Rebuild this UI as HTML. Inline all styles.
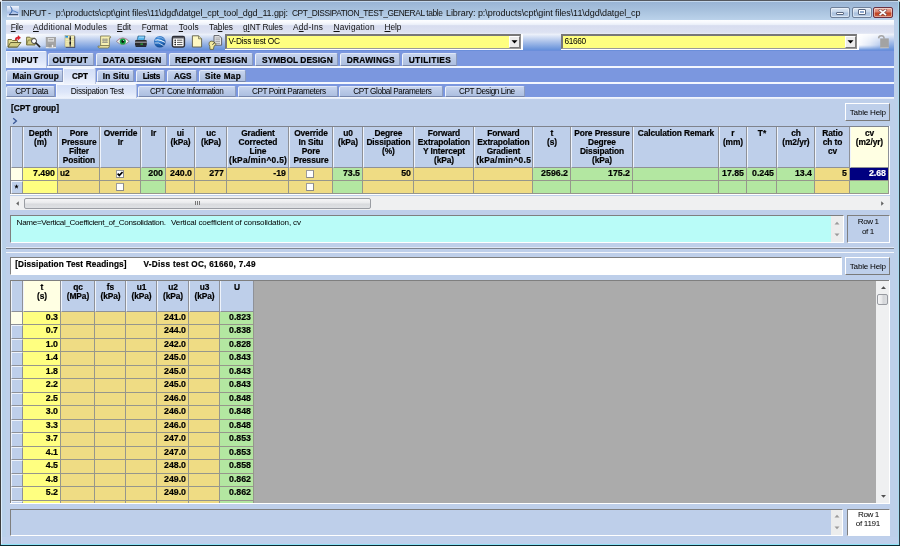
<!DOCTYPE html><html><head><meta charset="utf-8"><title>INPUT</title><style>
html,body{margin:0;padding:0}
body{width:900px;height:546px;position:relative;overflow:hidden;background:#c3d5ec;font-family:"Liberation Sans",sans-serif;font-size:8px;color:#000}
div,span{box-sizing:border-box}
.a{position:absolute}
.t{position:absolute;white-space:nowrap;filter:blur(0.3px)}
.b{font-weight:bold;-webkit-text-stroke:0.2px currentColor}
.tab{position:absolute;border-radius:2px 2px 0 0;background:linear-gradient(#c8d5ee 0%,#b9c9e7 45%,#adbfe0 100%);border-left:1px solid #eef3fc;border-top:1px solid #dfe7f7;border-right:1px solid #8b9bbd;border-bottom:1px solid #7787ad}
.sel{position:absolute;background:linear-gradient(#d3dff7 0%,#dde6f9 55%,#eef3fd 100%);border-top-right-radius:2px;border-left:1px solid #f4f7fd;border-top:1px solid #f4f7fd;border-right:1px solid #b4c1dd}
.hc{position:absolute;background:#becfea;border-left:1px solid #eef3fb;border-right:1px solid #8e9198;border-bottom:1px solid #8e9198}
.c{position:absolute;border-right:1px solid #96968c;border-bottom:1px solid #96968c}
.sunk{position:absolute;border-top:1px solid #7f7f7f;border-left:1px solid #7f7f7f;border-right:1px solid #fff;border-bottom:1px solid #fff}
.btn{position:absolute;background:#becfea;border-top:1px solid #fff;border-left:1px solid #fff;border-right:1px solid #7a7a7a;border-bottom:1px solid #7a7a7a}
.cb{position:absolute;width:8px;height:8px;background:#fff;border:1px solid #9c9c9c;border-bottom-color:#8a8a8a;border-right-color:#8a8a8a}
u{text-decoration:underline;text-underline-offset:1px}
</style></head><body>
<div class="a" style="left:0;top:0;width:900px;height:21px;background:linear-gradient(#97b2d3 0%,#9ab5d5 10%,#a6c0dc 45%,#bdd4ec 100%)"></div>
<div class="a" style="left:1px;top:1px;width:898px;height:1px;background:#c3d7ec"></div>
<div class="a" style="left:0;top:20px;width:6px;height:526px;background:#b9d0ea"></div>
<div class="a" style="left:894px;top:20px;width:6px;height:526px;background:#bdd0ea"></div>
<div class="a" style="left:0;top:537px;width:900px;height:9px;background:#bfd0ec"></div>
<div class="a" style="left:1px;top:1px;width:1px;height:543px;background:#dcecfb"></div>
<div class="a" style="left:898px;top:1px;width:1px;height:543px;background:#a9d9ee"></div>
<div class="a" style="left:0;top:0;width:900px;height:1px;background:#54585e"></div>
<div class="a" style="left:0;top:0;width:1px;height:546px;background:#3c3c3c"></div>
<div class="a" style="left:899px;top:0;width:1px;height:546px;background:#2f3f49"></div>
<div class="a" style="left:1px;top:544px;width:898px;height:1px;background:#8fe3f7"></div>
<div class="a" style="left:0;top:545px;width:900px;height:1px;background:#0c2a32"></div>
<div class="a" style="left:0;top:0;width:2px;height:1px;background:#e8e8e8"></div><div class="a" style="left:0;top:1px;width:1px;height:1px;background:#bbb"></div>
<div class="a" style="left:898px;top:0;width:2px;height:1px;background:#e8e8e8"></div><div class="a" style="left:899px;top:1px;width:1px;height:1px;background:#bbb"></div>
<svg class="a" style="left:7px;top:6px" width="12" height="11" viewBox="0 0 12 11"><defs><linearGradient id="ig" x1="0" y1="0" x2="0" y2="1"><stop offset="0" stop-color="#eef3fb"/><stop offset="0.6" stop-color="#a9c0e6"/><stop offset="1" stop-color="#e8eef9"/></linearGradient></defs><rect x="0" y="0" width="12" height="11" fill="url(#ig)"/><path d="M3.5 0.5 Q5.5 3 5 5 Q4.5 7 2.5 8" stroke="#2f5fa8" stroke-width="1" fill="none"/><path d="M5 4.5 Q8 5 11 7" stroke="#5a86c8" stroke-width="1" fill="none"/><path d="M2 8.7 L11 8.7" stroke="#1c2c48" stroke-width="1"/></svg>
<div id="ti1" class="t" style="left:21px;top:7px;font-size:9.0px;line-height:12px;height:12px;letter-spacing:-0.400px;color:#111;white-space:pre;">INPUT -</div>
<div id="ti2" class="t" style="left:55.8px;top:7px;font-size:9.0px;line-height:12px;height:12px;letter-spacing:-0.109px;color:#111;white-space:pre;">p:\products\cpt\gint files\11\dgd\datgel_cpt_tool_dgd_11.gpj:</div>
<div id="ti3" class="t" style="left:291.9px;top:7px;font-size:8.4px;line-height:12px;height:12px;letter-spacing:-0.400px;color:#111;white-space:pre;">CPT_DISSIPATION_TEST_GENERAL table</div>
<div id="ti4" class="t" style="left:446px;top:7px;font-size:9.0px;line-height:12px;height:12px;letter-spacing:-0.068px;color:#111;white-space:pre;">Library: p:\products\cpt\gint files\11\dgd\datgel_cp</div>
<div class="a" style="left:830px;top:7px;width:20px;height:11px;background:linear-gradient(#dbe6f3 0%,#c3d4e9 45%,#a9c0dd 55%,#bcd0e8 100%);border:1px solid #6d7f99;border-radius:2px;box-shadow:inset 0 0 0 1px rgba(255,255,255,.45)"></div>
<div class="a" style="left:852px;top:7px;width:20px;height:11px;background:linear-gradient(#dbe6f3 0%,#c3d4e9 45%,#a9c0dd 55%,#bcd0e8 100%);border:1px solid #6d7f99;border-radius:2px;box-shadow:inset 0 0 0 1px rgba(255,255,255,.45)"></div>
<div class="a" style="left:873px;top:7px;width:20px;height:11px;background:linear-gradient(#e9a898 0%,#d9806c 45%,#c0401f 55%,#d0603f 100%);border:1px solid #6a3040;border-radius:2px;box-shadow:inset 0 0 0 1px rgba(255,255,255,.45)"></div>
<div class="a" style="left:836px;top:12px;width:8px;height:3px;background:#fff;border:1px solid #5a6880;border-radius:1px"></div>
<div class="a" style="left:858px;top:9px;width:8px;height:6px;background:#fff;border:1px solid #5a6880;border-radius:1px"></div>
<div class="a" style="left:860px;top:11px;width:4px;height:2px;background:#8ea9cf;border:0"></div>
<svg class="a" style="left:878px;top:9px" width="10" height="7" viewBox="0 0 10 7"><path d="M2.2 1.4 L7.4 5.6 M7.4 1.4 L2.2 5.6" stroke="#7a4a48" stroke-width="2.9" stroke-linecap="square"/><path d="M2.2 1.4 L7.4 5.6 M7.4 1.4 L2.2 5.6" stroke="#fff" stroke-width="1.7" stroke-linecap="square"/></svg>
<div class="a" style="left:6px;top:20px;width:888px;height:14px;background:linear-gradient(#fdfeff 0%,#f6f8fd 18%,#e9eef8 36%,#d8ddef 40%,#dde2f2 88%,#e8ecf6 100%)"></div>
<div id="m0" class="t" style="left:10.8px;top:21px;font-size:8.3px;line-height:12px;height:12px;letter-spacing:-0.297px;color:#111;white-space:pre;"><u>F</u>ile</div>
<div id="m1" class="t" style="left:33px;top:21px;font-size:8.3px;line-height:12px;height:12px;letter-spacing:0.228px;color:#111;white-space:pre;"><u>A</u>dditional Modules</div>
<div id="m2" class="t" style="left:117px;top:21px;font-size:8.3px;line-height:12px;height:12px;letter-spacing:-0.104px;color:#111;white-space:pre;"><u>E</u>dit</div>
<div id="m3" class="t" style="left:141.7px;top:21px;font-size:8.3px;line-height:12px;height:12px;letter-spacing:-0.102px;color:#111;white-space:pre;">F<u>o</u>rmat</div>
<div id="m4" class="t" style="left:178.7px;top:21px;font-size:8.3px;line-height:12px;height:12px;letter-spacing:0.152px;color:#111;white-space:pre;"><u>T</u>ools</div>
<div id="m5" class="t" style="left:209px;top:21px;font-size:8.3px;line-height:12px;height:12px;letter-spacing:0.000px;color:#111;white-space:pre;">Ta<u>b</u>les</div>
<div id="m6" class="t" style="left:243px;top:21px;font-size:8.3px;line-height:12px;height:12px;letter-spacing:-0.153px;color:#111;white-space:pre;">g<u>I</u>NT Rules</div>
<div id="m7" class="t" style="left:293px;top:21px;font-size:8.3px;line-height:12px;height:12px;letter-spacing:0.229px;color:#111;white-space:pre;">A<u>d</u>d-Ins</div>
<div id="m8" class="t" style="left:333.5px;top:21px;font-size:8.3px;line-height:12px;height:12px;letter-spacing:0.198px;color:#111;white-space:pre;"><u>N</u>avigation</div>
<div id="m9" class="t" style="left:384.5px;top:21px;font-size:8.3px;line-height:12px;height:12px;letter-spacing:-0.026px;color:#111;white-space:pre;"><u>H</u>elp</div>
<div class="a" style="left:6px;top:34px;width:888px;height:17px;background:linear-gradient(#eff3fb 0%,#c9d7f1 25%,#a3bce8 50%,#7fa3e0 75%,#5d8ad8 100%)"></div>
<div class="a" style="left:6px;top:34px;width:70px;height:17px;background:linear-gradient(to right,rgba(255,255,255,.95) 0%,rgba(255,255,255,.75) 30%,rgba(255,255,255,0) 100%);-webkit-mask-image:linear-gradient(to bottom,#000 0%,#000 65%,transparent 95%);mask-image:linear-gradient(to bottom,#000 0%,#000 65%,transparent 95%)"></div>
<div class="a" style="left:859px;top:34px;width:32px;height:17px;background:linear-gradient(to right,rgba(255,255,255,.95) 0%,rgba(255,255,255,.7) 35%,rgba(255,255,255,0) 100%);-webkit-mask-image:linear-gradient(to bottom,#000 0%,#000 65%,transparent 95%);mask-image:linear-gradient(to bottom,#000 0%,#000 65%,transparent 95%)"></div>
<div class="a" style="left:225px;top:34px;width:298px;height:17px;background:#fff"></div>
<div class="a" style="left:225px;top:34px;width:296px;height:15px;background:#ffff80;border-top:2px solid #787878;border-left:2px solid #787878;border-right:1px solid #8c8c8c;border-bottom:1px solid #9a9a9a"></div>
<div class="a" style="left:509px;top:36px;width:11px;height:12px;background:#ececec;border-top:1px solid #fff;border-left:1px solid #fff;border-right:1px solid #7a7a7a;border-bottom:1px solid #7a7a7a"></div>
<svg class="a" style="left:511px;top:40px" width="7" height="4" viewBox="0 0 7 4"><path d="M0.5 0.3 L6.5 0.3 L3.5 3.6 Z" fill="#000"/></svg>
<div id="cb1" class="t" style="left:228.5px;top:35px;font-size:8.3px;line-height:12px;height:12px;letter-spacing:-0.224px;color:#000;white-space:pre;">V-Diss test OC</div>
<div class="a" style="left:561px;top:34px;width:298px;height:17px;background:#fff"></div>
<div class="a" style="left:561px;top:34px;width:296px;height:15px;background:#ffff80;border-top:2px solid #787878;border-left:2px solid #787878;border-right:1px solid #8c8c8c;border-bottom:1px solid #9a9a9a"></div>
<div class="a" style="left:845px;top:36px;width:11px;height:12px;background:#ececec;border-top:1px solid #fff;border-left:1px solid #fff;border-right:1px solid #7a7a7a;border-bottom:1px solid #7a7a7a"></div>
<svg class="a" style="left:847px;top:40px" width="7" height="4" viewBox="0 0 7 4"><path d="M0.5 0.3 L6.5 0.3 L3.5 3.6 Z" fill="#000"/></svg>
<div id="cb2" class="t" style="left:564.5px;top:35px;font-size:8.3px;line-height:12px;height:12px;letter-spacing:-0.395px;color:#000;white-space:pre;">61660</div>
<svg class="a" style="left:7px;top:35px" width="15" height="13" viewBox="0 0 15 13"><path d="M1 4.5 L1 12 L10.5 12 L10.5 5.5 L5.5 5.5 L4.5 4.5 Z" fill="#e4df98" stroke="#6d6a34" stroke-width="0.9"/><path d="M1 12 L3.5 7.5 L14 7.5 L10.5 12 Z" fill="#d3cd84" stroke="#5c5a2c" stroke-width="0.9"/><path d="M8.2 5.2 Q8 1.8 11 2 L11 0.6 L13.6 2.8 L11 5 L11 3.6 Q9.4 3.4 9.5 5.2 Z" fill="#e8202a" stroke="#b01018" stroke-width="0.4"/></svg>
<svg class="a" style="left:26px;top:35px" width="15" height="13" viewBox="0 0 15 13"><path d="M0.6 2.2 L0.6 9.8 L9 9.8 L9 3.2 L4.6 3.2 L3.8 2.2 Z" fill="#dcd690" stroke="#6d6a34" stroke-width="0.9"/><path d="M0.6 9.8 L2.2 5 L9.5 5 L9 9.8 Z" fill="#cfc982" stroke="#6d6a34" stroke-width="0.7"/><circle cx="8" cy="6" r="2.5" fill="#fff" stroke="#444" stroke-width="1"/><path d="M10 8 L13.6 11.6" stroke="#222" stroke-width="1.6" stroke-linecap="round"/></svg>
<svg class="a" style="left:45px;top:36px" width="12" height="13" viewBox="0 0 12 13"><rect x="0.8" y="1" width="10.2" height="11" fill="#a4a4a4"/><rect x="0.8" y="11" width="10.2" height="1.2" fill="#e6e6e6"/><rect x="2.8" y="2" width="6.2" height="3.6" fill="#dcdcdc"/><rect x="3.6" y="3" width="4.6" height="1.2" fill="#a9a9a9"/><rect x="3.6" y="8" width="5" height="3.4" fill="#9a9a9a"/><rect x="6.8" y="8.8" width="1.4" height="2.6" fill="#f2f2f2"/></svg>
<svg class="a" style="left:64px;top:35px" width="12" height="13" viewBox="0 0 12 13"><rect x="1.8" y="1.2" width="9.4" height="11.6" fill="#3b3f5c"/><rect x="1" y="0.5" width="9.2" height="11.4" fill="#f1ecb4" stroke="#8a8660" stroke-width="0.4"/><rect x="1.4" y="0.9" width="2.6" height="1.8" fill="#1f8ee0"/><path d="M1.2 3.4 L10 3.4 M1.2 5.6 L10 5.6 M1.2 7.8 L10 7.8 M1.2 10 L10 10" stroke="#d8d29a" stroke-width="0.7"/><rect x="5.6" y="1" width="1.3" height="10.6" fill="#5a5a5a"/><rect x="5.6" y="2.6" width="1.3" height="2.2" fill="#111"/><rect x="5.6" y="6.8" width="1.3" height="2.6" fill="#111"/></svg>
<svg class="a" style="left:97px;top:35px" width="15" height="14" viewBox="0 0 15 14"><path d="M3.6 1 L12.4 1 Q14 1.2 13.6 2.8 L12.4 2.8 L12.4 10.6 L3.6 10.6 Z" fill="#f7f1b2" stroke="#77724a" stroke-width="0.8"/><path d="M1 11 Q0.6 13 2.6 13 L10.8 13 Q12.6 12.8 12.4 10.6 L3 10.6 Q3.4 11.8 1 11 Z" fill="#ede7a4" stroke="#77724a" stroke-width="0.8"/><path d="M5.2 4.2 L10.8 4.2 M5.2 5.8 L10.8 5.8 M5.2 7.4 L10.8 7.4" stroke="#8a8a80" stroke-width="0.9"/><path d="M6.6 3.6 L6.6 8 M9.2 3.6 L9.2 8" stroke="#a0a094" stroke-width="0.6"/></svg>
<svg class="a" style="left:116px;top:36px" width="14" height="11" viewBox="0 0 14 11"><path d="M0.4 5.4 Q6.8 -1.2 13.2 5.4 Q6.8 11.6 0.4 5.4 Z" fill="#f4f4f4" stroke="#8a8088" stroke-width="0.9"/><path d="M1.2 4.4 Q6.8 -0.6 12.4 4.4" stroke="#c88aa0" stroke-width="0.7" fill="none"/><circle cx="6.8" cy="5.5" r="3.1" fill="#16a043"/><circle cx="6.8" cy="5.5" r="1.4" fill="#0a1a10"/><circle cx="7.4" cy="4.6" r="0.5" fill="#dff"/></svg>
<svg class="a" style="left:134px;top:35px" width="14" height="13" viewBox="0 0 14 13"><path d="M4 1 L11 1 L10 5.4 L3 5.4 Z" fill="#59b7ee" stroke="#27506e" stroke-width="0.6"/><path d="M5 2.2 L10 2.2" stroke="#bfe6ff" stroke-width="0.8"/><path d="M1 6 Q1 5 2.4 5 L11.4 5 Q12.8 5 12.8 6 L12.8 10.4 L1 10.4 Z" fill="#2b2b2d"/><rect x="1" y="6.6" width="11.8" height="1.2" fill="#9c9ca2"/><rect x="1.6" y="10.4" width="10.6" height="1.4" fill="#0c0c0c"/><rect x="6.4" y="8.6" width="2.6" height="1" fill="#28c43c"/></svg>
<svg class="a" style="left:153px;top:35px" width="14" height="13" viewBox="0 0 14 13"><defs><radialGradient id="gg" cx="0.4" cy="0.3" r="0.8"><stop offset="0" stop-color="#4a9ae6"/><stop offset="0.6" stop-color="#1f63b4"/><stop offset="1" stop-color="#123f7c"/></radialGradient></defs><circle cx="6.8" cy="6.8" r="5.8" fill="url(#gg)"/><path d="M2.2 5.2 Q6 3.6 12 7.4" stroke="#eef4fc" stroke-width="1.1" fill="none"/><path d="M1.6 8 Q5.4 6.6 10.6 10.6" stroke="#cfe0f4" stroke-width="0.9" fill="none"/><path d="M4.2 2 Q8 1.6 11.6 4.6" stroke="#a9c8ee" stroke-width="0.7" fill="none"/></svg>
<svg class="a" style="left:171px;top:35px" width="15" height="13" viewBox="0 0 15 13"><rect x="1.4" y="1.6" width="12" height="10.4" rx="1.4" fill="#fff" stroke="#2f3038" stroke-width="1.5"/><rect x="2" y="2" width="10.8" height="1.5" fill="#55565e"/><circle cx="4.2" cy="5.2" r="0.8" fill="#111"/><circle cx="4.2" cy="7.4" r="0.8" fill="#111"/><circle cx="4.2" cy="9.6" r="0.8" fill="#111"/><path d="M6 5.2 L11.4 5.2 M6 7.4 L11.4 7.4 M6 9.6 L11.4 9.6" stroke="#444" stroke-width="0.9"/></svg>
<svg class="a" style="left:191px;top:35px" width="12" height="13" viewBox="0 0 12 13"><path d="M1.4 0.8 L7.6 0.8 L10.6 3.8 L10.6 12 L1.4 12 Z" fill="#fdf8c2" stroke="#5e5c48" stroke-width="0.9"/><path d="M7.6 0.8 L7.6 3.8 L10.6 3.8" fill="#e6e0a0" stroke="#5e5c48" stroke-width="0.7"/></svg>
<svg class="a" style="left:208px;top:35px" width="15" height="15" viewBox="0 0 15 15"><path d="M6 0.6 L11.2 0.6 L13.6 3 L13.6 10.2 L6 10.2 Z" fill="#e9e9ea" stroke="#55565c" stroke-width="0.9"/><path d="M7.4 3 L12 3 M7.4 4.8 L12 4.8 M7.4 6.6 L12 6.6 M7.4 8.4 L12 8.4" stroke="#8d8d92" stroke-width="0.8"/><path d="M1.2 7.4 Q3 5.4 5 6.4 L7.6 8.2 Q8.6 9.2 7.4 10 L6 11.2 L5.4 14.4 L2 14.4 L1.8 11.4 Q0.6 9.4 1.2 7.4 Z" fill="#f3ea9e" stroke="#5f5a34" stroke-width="0.8"/><path d="M4.4 9.6 L7 7.6" stroke="#333" stroke-width="0.9"/></svg>
<svg class="a" style="left:876px;top:35px" width="14" height="14" viewBox="0 0 14 14"><path d="M2.6 3.4 Q2.8 0.8 5.4 0.8 Q8 0.8 8.2 3.6" stroke="#a6a6a6" stroke-width="1.5" fill="none"/><rect x="4.2" y="3.4" width="8.6" height="9.6" fill="#a3a3a3"/><rect x="4.2" y="12.4" width="8.6" height="0.8" fill="#c8c8c8"/></svg>
<div class="a" style="left:6px;top:51px;width:888px;height:15px;background:#7b97df"></div>
<div class="a" style="left:6px;top:50px;width:888px;height:1px;background:#6a8edb"></div>
<div class="a" style="left:6px;top:66px;width:888px;height:2px;background:#f3f7fe"></div>
<div class="a" style="left:6px;top:68px;width:888px;height:14px;background:#7b97df"></div>
<div class="a" style="left:6px;top:82px;width:888px;height:2px;background:#f3f7fe"></div>
<div class="a" style="left:6px;top:84px;width:888px;height:13px;background:#7b97df"></div>
<div class="a" style="left:6px;top:97px;width:888px;height:2px;background:linear-gradient(#f6f9fe,#e3eaf7)"></div>
<div class="sel" style="left:6px;top:51px;width:41px;height:17px"></div>
<div id="ta0" class="t b" style="left:12px;top:54px;font-size:8.4px;line-height:12px;height:12px;letter-spacing:0.219px;color:#000;white-space:pre;">INPUT</div>
<div class="tab" style="left:48px;top:53px;width:46px;height:13px"></div>
<div id="ta1" class="t b" style="left:52.5px;top:54px;font-size:8.4px;line-height:12px;height:12px;letter-spacing:0.212px;color:#000;white-space:pre;">OUTPUT</div>
<div class="tab" style="left:96px;top:53px;width:71px;height:13px"></div>
<div id="ta2" class="t b" style="left:102.7px;top:54px;font-size:8.4px;line-height:12px;height:12px;letter-spacing:0.246px;color:#000;white-space:pre;">DATA DESIGN</div>
<div class="tab" style="left:169px;top:53px;width:84px;height:13px"></div>
<div id="ta3" class="t b" style="left:175px;top:54px;font-size:8.4px;line-height:12px;height:12px;letter-spacing:0.246px;color:#000;white-space:pre;">REPORT DESIGN</div>
<div class="tab" style="left:255px;top:53px;width:83px;height:13px"></div>
<div id="ta4" class="t b" style="left:262px;top:54px;font-size:8.4px;line-height:12px;height:12px;letter-spacing:0.048px;color:#000;white-space:pre;">SYMBOL DESIGN</div>
<div class="tab" style="left:340px;top:53px;width:60px;height:13px"></div>
<div id="ta5" class="t b" style="left:346.8px;top:54px;font-size:8.4px;line-height:12px;height:12px;letter-spacing:0.234px;color:#000;white-space:pre;">DRAWINGS</div>
<div class="tab" style="left:402px;top:53px;width:55px;height:13px"></div>
<div id="ta6" class="t b" style="left:408.7px;top:54px;font-size:8.4px;line-height:12px;height:12px;letter-spacing:0.317px;color:#000;white-space:pre;">UTILITIES</div>
<div class="tab" style="left:6px;top:70px;width:57px;height:12px"></div>
<div id="tb0" class="t b" style="left:12.5px;top:71px;font-size:8.2px;line-height:11px;height:11px;letter-spacing:0.080px;color:#000;white-space:pre;">Main Group</div>
<div class="sel" style="left:63px;top:68px;width:33px;height:16px"></div>
<div id="tb1" class="t b" style="left:72px;top:71px;font-size:8.2px;line-height:11px;height:11px;letter-spacing:-0.188px;color:#000;white-space:pre;">CPT</div>
<div class="tab" style="left:97px;top:70px;width:37px;height:12px"></div>
<div id="tb2" class="t b" style="left:102.7px;top:71px;font-size:8.2px;line-height:11px;height:11px;letter-spacing:0.264px;color:#000;white-space:pre;">In Situ</div>
<div class="tab" style="left:136px;top:70px;width:29px;height:12px"></div>
<div id="tb3" class="t b" style="left:142.7px;top:71px;font-size:8.2px;line-height:11px;height:11px;letter-spacing:-0.400px;color:#000;white-space:pre;">Lists</div>
<div class="tab" style="left:167px;top:70px;width:30px;height:12px"></div>
<div id="tb4" class="t b" style="left:173.9px;top:71px;font-size:8.2px;line-height:11px;height:11px;letter-spacing:-0.075px;color:#000;white-space:pre;">AGS</div>
<div class="tab" style="left:199px;top:70px;width:47px;height:12px"></div>
<div id="tb5" class="t b" style="left:205px;top:71px;font-size:8.2px;line-height:11px;height:11px;letter-spacing:0.290px;color:#000;white-space:pre;">Site Map</div>
<div class="tab" style="left:6px;top:86px;width:49px;height:11px"></div>
<div id="tc0" class="t" style="left:15.2px;top:86px;font-size:8.2px;line-height:11px;height:11px;letter-spacing:-0.400px;color:#000;white-space:pre;">CPT Data</div>
<div class="sel" style="left:56px;top:84px;width:81px;height:14px"></div>
<div id="tc1" class="t" style="left:70.7px;top:86px;font-size:8.2px;line-height:11px;height:11px;letter-spacing:-0.259px;color:#000;white-space:pre;">Dissipation Test</div>
<div class="tab" style="left:138px;top:86px;width:98px;height:11px"></div>
<div id="tc2" class="t" style="left:150px;top:86px;font-size:8.2px;line-height:11px;height:11px;letter-spacing:-0.400px;color:#000;white-space:pre;">CPT Cone Information</div>
<div class="tab" style="left:238px;top:86px;width:100px;height:11px"></div>
<div id="tc3" class="t" style="left:251.9px;top:86px;font-size:8.2px;line-height:11px;height:11px;letter-spacing:-0.400px;color:#000;white-space:pre;">CPT Point Parameters</div>
<div class="tab" style="left:339px;top:86px;width:104px;height:11px"></div>
<div id="tc4" class="t" style="left:353.2px;top:86px;font-size:8.2px;line-height:11px;height:11px;letter-spacing:-0.400px;color:#000;white-space:pre;">CPT Global Parameters</div>
<div class="tab" style="left:445px;top:86px;width:80px;height:11px"></div>
<div id="tc5" class="t" style="left:459px;top:86px;font-size:8.2px;line-height:11px;height:11px;letter-spacing:-0.400px;color:#000;white-space:pre;">CPT Design Line</div>
<div class="a" style="left:6px;top:99px;width:888px;height:438px;background:#becfea"></div>
<div id="grp" class="t b" style="left:11px;top:102px;font-size:8.4px;line-height:12px;height:12px;letter-spacing:-0.039px;color:#000;white-space:pre;">[CPT group]</div>
<svg class="a" style="left:12px;top:116.5px" width="6" height="8" viewBox="0 0 6 8"><path d="M1.2 1.2 L4.4 4 L1.2 6.8" stroke="#3a5896" stroke-width="1.3" fill="none"/></svg>
<div class="btn" style="left:845px;top:103px;width:45px;height:18px"></div>
<div id="th1" class="t" style="left:849.8px;top:107px;font-size:8.1px;line-height:11px;height:11px;letter-spacing:-0.228px;color:#000;white-space:pre;">Table Help</div>
<div class="a" style="left:10px;top:126px;width:880px;height:69px;background:#7f838c"></div>
<div class="a" style="left:10px;top:194px;width:880px;height:1px;background:#fff"></div>
<div class="a" style="left:889px;top:126px;width:1px;height:69px;background:#fff"></div>
<div class="hc" style="left:11px;top:127px;width:12px;height:41px;background:#becfea"></div>
<div class="c" style="left:11px;top:168px;width:12px;height:13px;background:#ffffe8;border-color:#8e9198;"></div>
<div class="c" style="left:11px;top:181px;width:12px;height:13px;background:#becfea;border-color:#8e9198;border-left:1px solid #eef3fb;border-top:1px solid #eef3fb;"></div>
<svg class="a" style="left:14px;top:184px" width="5" height="5" viewBox="0 0 6 6"><path d="M3 0.2 L3.7 2.2 L5.8 2.2 L4.1 3.4 L4.8 5.6 L3 4.2 L1.2 5.6 L1.9 3.4 L0.2 2.2 L2.3 2.2 Z" fill="#000"/></svg>
<div class="hc" style="left:23px;top:127px;width:35px;height:41px;background:#becfea"></div>
<div class="t b" id="h1_0" style="left:13px;width:55px;top:127px;text-align:center;font-size:8.4px;line-height:12px;height:12px;letter-spacing:-0.1px;text-indent:-0.1px">Depth</div>
<div class="t b" id="h1_1" style="left:13px;width:55px;top:136px;text-align:center;font-size:8.4px;line-height:12px;height:12px;letter-spacing:-0.1px;text-indent:-0.1px">(m)</div>
<div class="c" style="left:23px;top:168px;width:35px;height:13px;background:#ffff80"></div>
<div class="t b" id="v0_1" style="right:845.00px;top:167px;font-size:8.8px;line-height:12px;height:12px;letter-spacing:0.0px;color:#000">7.490</div>
<div class="c" style="left:23px;top:181px;width:35px;height:13px;background:#ffff80"></div>
<div class="hc" style="left:58px;top:127px;width:42px;height:41px;background:#becfea"></div>
<div class="t b" id="h2_0" style="left:48px;width:62px;top:127px;text-align:center;font-size:8.4px;line-height:12px;height:12px;letter-spacing:-0.1px;text-indent:-0.1px">Pore</div>
<div class="t b" id="h2_1" style="left:48px;width:62px;top:136px;text-align:center;font-size:8.4px;line-height:12px;height:12px;letter-spacing:-0.1px;text-indent:-0.1px">Pressure</div>
<div class="t b" id="h2_2" style="left:48px;width:62px;top:145px;text-align:center;font-size:8.4px;line-height:12px;height:12px;letter-spacing:-0.1px;text-indent:-0.1px">Filter</div>
<div class="t b" id="h2_3" style="left:48px;width:62px;top:154px;text-align:center;font-size:8.4px;line-height:12px;height:12px;letter-spacing:-0.1px;text-indent:-0.1px">Position</div>
<div class="c" style="left:58px;top:168px;width:42px;height:13px;background:#efdc84"></div>
<div class="t b" id="v0_2" style="left:60px;top:167px;font-size:8.3px;line-height:12px;height:12px;letter-spacing:-0.1px;color:#000">u2</div>
<div class="c" style="left:58px;top:181px;width:42px;height:13px;background:#efdc84"></div>
<div class="hc" style="left:100px;top:127px;width:41px;height:41px;background:#becfea"></div>
<div class="t b" id="h3_0" style="left:90px;width:61px;top:127px;text-align:center;font-size:8.4px;line-height:12px;height:12px;letter-spacing:-0.1px;text-indent:-0.1px">Override</div>
<div class="t b" id="h3_1" style="left:90px;width:61px;top:136px;text-align:center;font-size:8.4px;line-height:12px;height:12px;letter-spacing:-0.1px;text-indent:-0.1px">Ir</div>
<div class="c" style="left:100px;top:168px;width:41px;height:13px;background:#efdc84"></div>
<div class="cb" style="left:116px;top:170px"></div>
<svg class="a" style="left:117px;top:171px" width="6" height="6" viewBox="0 0 6 6"><path d="M0.6 2.6 L2.3 4.4 L5.6 1" stroke="#000" stroke-width="1.7" fill="none"/></svg>
<div class="c" style="left:100px;top:181px;width:41px;height:13px;background:#efdc84"></div>
<div class="cb" style="left:116px;top:183px"></div>
<div class="hc" style="left:141px;top:127px;width:25px;height:41px;background:#becfea"></div>
<div class="t b" id="h4_0" style="left:131px;width:45px;top:127px;text-align:center;font-size:8.4px;line-height:12px;height:12px;letter-spacing:-0.1px;text-indent:-0.1px">Ir</div>
<div class="c" style="left:141px;top:168px;width:25px;height:13px;background:#b3e7a1"></div>
<div class="t b" id="v0_4" style="right:737.00px;top:167px;font-size:8.8px;line-height:12px;height:12px;letter-spacing:0.0px;color:#000">200</div>
<div class="c" style="left:141px;top:181px;width:25px;height:13px;background:#b3e7a1"></div>
<div class="hc" style="left:166px;top:127px;width:29px;height:41px;background:#becfea"></div>
<div class="t b" id="h5_0" style="left:156px;width:49px;top:127px;text-align:center;font-size:8.4px;line-height:12px;height:12px;letter-spacing:-0.1px;text-indent:-0.1px">ui</div>
<div class="t b" id="h5_1" style="left:156px;width:49px;top:136px;text-align:center;font-size:8.4px;line-height:12px;height:12px;letter-spacing:-0.1px;text-indent:-0.1px">(kPa)</div>
<div class="c" style="left:166px;top:168px;width:29px;height:13px;background:#efdc84"></div>
<div class="t b" id="v0_5" style="right:708.00px;top:167px;font-size:8.8px;line-height:12px;height:12px;letter-spacing:0.0px;color:#000">240.0</div>
<div class="c" style="left:166px;top:181px;width:29px;height:13px;background:#efdc84"></div>
<div class="hc" style="left:195px;top:127px;width:32px;height:41px;background:#becfea"></div>
<div class="t b" id="h6_0" style="left:185px;width:52px;top:127px;text-align:center;font-size:8.4px;line-height:12px;height:12px;letter-spacing:-0.1px;text-indent:-0.1px">uc</div>
<div class="t b" id="h6_1" style="left:185px;width:52px;top:136px;text-align:center;font-size:8.4px;line-height:12px;height:12px;letter-spacing:-0.1px;text-indent:-0.1px">(kPa)</div>
<div class="c" style="left:195px;top:168px;width:32px;height:13px;background:#efdc84"></div>
<div class="t b" id="v0_6" style="right:676.00px;top:167px;font-size:8.8px;line-height:12px;height:12px;letter-spacing:0.0px;color:#000">277</div>
<div class="c" style="left:195px;top:181px;width:32px;height:13px;background:#efdc84"></div>
<div class="hc" style="left:227px;top:127px;width:62px;height:41px;background:#becfea"></div>
<div class="t b" id="h7_0" style="left:217px;width:82px;top:127px;text-align:center;font-size:8.4px;line-height:12px;height:12px;letter-spacing:-0.1px;text-indent:-0.1px">Gradient</div>
<div class="t b" id="h7_1" style="left:217px;width:82px;top:136px;text-align:center;font-size:8.4px;line-height:12px;height:12px;letter-spacing:-0.1px;text-indent:-0.1px">Corrected</div>
<div class="t b" id="h7_2" style="left:217px;width:82px;top:145px;text-align:center;font-size:8.4px;line-height:12px;height:12px;letter-spacing:-0.1px;text-indent:-0.1px">Line</div>
<div class="t b" id="h7_3" style="left:217px;width:82px;top:154px;text-align:center;font-size:8.4px;line-height:12px;height:12px;letter-spacing:0.3px;text-indent:0.3px">(kPa/min^0.5)</div>
<div class="c" style="left:227px;top:168px;width:62px;height:13px;background:#efdc84"></div>
<div class="t b" id="v0_7" style="right:614.00px;top:167px;font-size:8.8px;line-height:12px;height:12px;letter-spacing:0.0px;color:#000">-19</div>
<div class="c" style="left:227px;top:181px;width:62px;height:13px;background:#efdc84"></div>
<div class="hc" style="left:289px;top:127px;width:44px;height:41px;background:#becfea"></div>
<div class="t b" id="h8_0" style="left:279px;width:64px;top:127px;text-align:center;font-size:8.4px;line-height:12px;height:12px;letter-spacing:-0.1px;text-indent:-0.1px">Override</div>
<div class="t b" id="h8_1" style="left:279px;width:64px;top:136px;text-align:center;font-size:8.4px;line-height:12px;height:12px;letter-spacing:-0.1px;text-indent:-0.1px">In Situ</div>
<div class="t b" id="h8_2" style="left:279px;width:64px;top:145px;text-align:center;font-size:8.4px;line-height:12px;height:12px;letter-spacing:-0.1px;text-indent:-0.1px">Pore</div>
<div class="t b" id="h8_3" style="left:279px;width:64px;top:154px;text-align:center;font-size:8.4px;line-height:12px;height:12px;letter-spacing:-0.1px;text-indent:-0.1px">Pressure</div>
<div class="c" style="left:289px;top:168px;width:44px;height:13px;background:#efdc84"></div>
<div class="cb" style="left:306px;top:170px"></div>
<div class="c" style="left:289px;top:181px;width:44px;height:13px;background:#efdc84"></div>
<div class="cb" style="left:306px;top:183px"></div>
<div class="hc" style="left:333px;top:127px;width:30px;height:41px;background:#becfea"></div>
<div class="t b" id="h9_0" style="left:323px;width:50px;top:127px;text-align:center;font-size:8.4px;line-height:12px;height:12px;letter-spacing:-0.1px;text-indent:-0.1px">u0</div>
<div class="t b" id="h9_1" style="left:323px;width:50px;top:136px;text-align:center;font-size:8.4px;line-height:12px;height:12px;letter-spacing:-0.1px;text-indent:-0.1px">(kPa)</div>
<div class="c" style="left:333px;top:168px;width:30px;height:13px;background:#b3e7a1"></div>
<div class="t b" id="v0_9" style="right:540.00px;top:167px;font-size:8.8px;line-height:12px;height:12px;letter-spacing:0.0px;color:#000">73.5</div>
<div class="c" style="left:333px;top:181px;width:30px;height:13px;background:#b3e7a1"></div>
<div class="hc" style="left:363px;top:127px;width:51px;height:41px;background:#becfea"></div>
<div class="t b" id="h10_0" style="left:353px;width:71px;top:127px;text-align:center;font-size:8.4px;line-height:12px;height:12px;letter-spacing:-0.1px;text-indent:-0.1px">Degree</div>
<div class="t b" id="h10_1" style="left:353px;width:71px;top:136px;text-align:center;font-size:8.4px;line-height:12px;height:12px;letter-spacing:-0.1px;text-indent:-0.1px">Dissipation</div>
<div class="t b" id="h10_2" style="left:353px;width:71px;top:145px;text-align:center;font-size:8.4px;line-height:12px;height:12px;letter-spacing:-0.1px;text-indent:-0.1px">(%)</div>
<div class="c" style="left:363px;top:168px;width:51px;height:13px;background:#efdc84"></div>
<div class="t b" id="v0_10" style="right:489.00px;top:167px;font-size:8.8px;line-height:12px;height:12px;letter-spacing:0.0px;color:#000">50</div>
<div class="c" style="left:363px;top:181px;width:51px;height:13px;background:#efdc84"></div>
<div class="hc" style="left:414px;top:127px;width:60px;height:41px;background:#becfea"></div>
<div class="t b" id="h11_0" style="left:404px;width:80px;top:127px;text-align:center;font-size:8.4px;line-height:12px;height:12px;letter-spacing:-0.1px;text-indent:-0.1px">Forward</div>
<div class="t b" id="h11_1" style="left:404px;width:80px;top:136px;text-align:center;font-size:8.4px;line-height:12px;height:12px;letter-spacing:-0.1px;text-indent:-0.1px">Extrapolation</div>
<div class="t b" id="h11_2" style="left:404px;width:80px;top:145px;text-align:center;font-size:8.4px;line-height:12px;height:12px;letter-spacing:-0.1px;text-indent:-0.1px">Y Intercept</div>
<div class="t b" id="h11_3" style="left:404px;width:80px;top:154px;text-align:center;font-size:8.4px;line-height:12px;height:12px;letter-spacing:-0.1px;text-indent:-0.1px">(kPa)</div>
<div class="c" style="left:414px;top:168px;width:60px;height:13px;background:#efdc84"></div>
<div class="c" style="left:414px;top:181px;width:60px;height:13px;background:#efdc84"></div>
<div class="hc" style="left:474px;top:127px;width:59px;height:41px;background:#becfea"></div>
<div class="t b" id="h12_0" style="left:464px;width:79px;top:127px;text-align:center;font-size:8.4px;line-height:12px;height:12px;letter-spacing:-0.1px;text-indent:-0.1px">Forward</div>
<div class="t b" id="h12_1" style="left:464px;width:79px;top:136px;text-align:center;font-size:8.4px;line-height:12px;height:12px;letter-spacing:-0.1px;text-indent:-0.1px">Extrapolation</div>
<div class="t b" id="h12_2" style="left:464px;width:79px;top:145px;text-align:center;font-size:8.4px;line-height:12px;height:12px;letter-spacing:-0.1px;text-indent:-0.1px">Gradient</div>
<div class="t b" id="h12_3" style="left:464px;width:79px;top:154px;text-align:center;font-size:8.4px;line-height:12px;height:12px;letter-spacing:0.3px;text-indent:0.3px">(kPa/min^0.5</div>
<div class="c" style="left:474px;top:168px;width:59px;height:13px;background:#efdc84"></div>
<div class="c" style="left:474px;top:181px;width:59px;height:13px;background:#efdc84"></div>
<div class="hc" style="left:533px;top:127px;width:38px;height:41px;background:#becfea"></div>
<div class="t b" id="h13_0" style="left:523px;width:58px;top:127px;text-align:center;font-size:8.4px;line-height:12px;height:12px;letter-spacing:-0.1px;text-indent:-0.1px">t</div>
<div class="t b" id="h13_1" style="left:523px;width:58px;top:136px;text-align:center;font-size:8.4px;line-height:12px;height:12px;letter-spacing:-0.1px;text-indent:-0.1px">(s)</div>
<div class="c" style="left:533px;top:168px;width:38px;height:13px;background:#b3e7a1"></div>
<div class="t b" id="v0_13" style="right:332.00px;top:167px;font-size:8.8px;line-height:12px;height:12px;letter-spacing:0.0px;color:#000">2596.2</div>
<div class="c" style="left:533px;top:181px;width:38px;height:13px;background:#b3e7a1"></div>
<div class="hc" style="left:571px;top:127px;width:62px;height:41px;background:#becfea"></div>
<div class="t b" id="h14_0" style="left:561px;width:82px;top:127px;text-align:center;font-size:8.4px;line-height:12px;height:12px;letter-spacing:-0.1px;text-indent:-0.1px">Pore Pressure</div>
<div class="t b" id="h14_1" style="left:561px;width:82px;top:136px;text-align:center;font-size:8.4px;line-height:12px;height:12px;letter-spacing:-0.1px;text-indent:-0.1px">Degree</div>
<div class="t b" id="h14_2" style="left:561px;width:82px;top:145px;text-align:center;font-size:8.4px;line-height:12px;height:12px;letter-spacing:-0.1px;text-indent:-0.1px">Dissipation</div>
<div class="t b" id="h14_3" style="left:561px;width:82px;top:154px;text-align:center;font-size:8.4px;line-height:12px;height:12px;letter-spacing:-0.1px;text-indent:-0.1px">(kPa)</div>
<div class="c" style="left:571px;top:168px;width:62px;height:13px;background:#b3e7a1"></div>
<div class="t b" id="v0_14" style="right:270.00px;top:167px;font-size:8.8px;line-height:12px;height:12px;letter-spacing:0.0px;color:#000">175.2</div>
<div class="c" style="left:571px;top:181px;width:62px;height:13px;background:#b3e7a1"></div>
<div class="hc" style="left:633px;top:127px;width:86px;height:41px;background:#becfea"></div>
<div class="t b" id="h15_0" style="left:623px;width:106px;top:127px;text-align:center;font-size:8.4px;line-height:12px;height:12px;letter-spacing:-0.1px;text-indent:-0.1px">Calculation Remark</div>
<div class="c" style="left:633px;top:168px;width:86px;height:13px;background:#b3e7a1"></div>
<div class="c" style="left:633px;top:181px;width:86px;height:13px;background:#b3e7a1"></div>
<div class="hc" style="left:719px;top:127px;width:28px;height:41px;background:#becfea"></div>
<div class="t b" id="h16_0" style="left:709px;width:48px;top:127px;text-align:center;font-size:8.4px;line-height:12px;height:12px;letter-spacing:-0.1px;text-indent:-0.1px">r</div>
<div class="t b" id="h16_1" style="left:709px;width:48px;top:136px;text-align:center;font-size:8.4px;line-height:12px;height:12px;letter-spacing:-0.1px;text-indent:-0.1px">(mm)</div>
<div class="c" style="left:719px;top:168px;width:28px;height:13px;background:#b3e7a1"></div>
<div class="t b" id="v0_16" style="right:156.00px;top:167px;font-size:8.8px;line-height:12px;height:12px;letter-spacing:0.0px;color:#000">17.85</div>
<div class="c" style="left:719px;top:181px;width:28px;height:13px;background:#b3e7a1"></div>
<div class="hc" style="left:747px;top:127px;width:30px;height:41px;background:#becfea"></div>
<div class="t b" id="h17_0" style="left:737px;width:50px;top:127px;text-align:center;font-size:8.4px;line-height:12px;height:12px;letter-spacing:-0.1px;text-indent:-0.1px">T*</div>
<div class="c" style="left:747px;top:168px;width:30px;height:13px;background:#b3e7a1"></div>
<div class="t b" id="v0_17" style="right:126.00px;top:167px;font-size:8.8px;line-height:12px;height:12px;letter-spacing:0.0px;color:#000">0.245</div>
<div class="c" style="left:747px;top:181px;width:30px;height:13px;background:#b3e7a1"></div>
<div class="hc" style="left:777px;top:127px;width:38px;height:41px;background:#becfea"></div>
<div class="t b" id="h18_0" style="left:767px;width:58px;top:127px;text-align:center;font-size:8.4px;line-height:12px;height:12px;letter-spacing:-0.1px;text-indent:-0.1px">ch</div>
<div class="t b" id="h18_1" style="left:767px;width:58px;top:136px;text-align:center;font-size:8.4px;line-height:12px;height:12px;letter-spacing:-0.1px;text-indent:-0.1px">(m2/yr)</div>
<div class="c" style="left:777px;top:168px;width:38px;height:13px;background:#b3e7a1"></div>
<div class="t b" id="v0_18" style="right:88.00px;top:167px;font-size:8.8px;line-height:12px;height:12px;letter-spacing:0.0px;color:#000">13.4</div>
<div class="c" style="left:777px;top:181px;width:38px;height:13px;background:#b3e7a1"></div>
<div class="hc" style="left:815px;top:127px;width:35px;height:41px;background:#becfea"></div>
<div class="t b" id="h19_0" style="left:805px;width:55px;top:127px;text-align:center;font-size:8.4px;line-height:12px;height:12px;letter-spacing:-0.1px;text-indent:-0.1px">Ratio</div>
<div class="t b" id="h19_1" style="left:805px;width:55px;top:136px;text-align:center;font-size:8.4px;line-height:12px;height:12px;letter-spacing:-0.1px;text-indent:-0.1px">ch to</div>
<div class="t b" id="h19_2" style="left:805px;width:55px;top:145px;text-align:center;font-size:8.4px;line-height:12px;height:12px;letter-spacing:-0.1px;text-indent:-0.1px">cv</div>
<div class="c" style="left:815px;top:168px;width:35px;height:13px;background:#efdc84"></div>
<div class="t b" id="v0_19" style="right:53.00px;top:167px;font-size:8.8px;line-height:12px;height:12px;letter-spacing:0.0px;color:#000">5</div>
<div class="c" style="left:815px;top:181px;width:35px;height:13px;background:#efdc84"></div>
<div class="hc" style="left:850px;top:127px;width:39px;height:41px;background:#ffffe3"></div>
<div class="t b" id="h20_0" style="left:840px;width:59px;top:127px;text-align:center;font-size:8.4px;line-height:12px;height:12px;letter-spacing:-0.1px;text-indent:-0.1px">cv</div>
<div class="t b" id="h20_1" style="left:840px;width:59px;top:136px;text-align:center;font-size:8.4px;line-height:12px;height:12px;letter-spacing:-0.1px;text-indent:-0.1px">(m2/yr)</div>
<div class="c" style="left:850px;top:168px;width:39px;height:13px;background:#000080"></div>
<div class="t b" id="v0_20" style="right:14.00px;top:167px;font-size:8.8px;line-height:12px;height:12px;letter-spacing:0.0px;color:#fff">2.68</div>
<div class="c" style="left:850px;top:181px;width:39px;height:13px;background:#b3e7a1"></div>
<div class="a" style="left:10px;top:196px;width:880px;height:14px;background:#eff0f1"></div>
<svg class="a" style="left:15px;top:200px" width="5" height="7" viewBox="0 0 5 7"><path d="M3.8 1.3 L1.2 3.5 L3.8 5.7 Z" fill="#606060"/></svg>
<svg class="a" style="left:880px;top:200px" width="5" height="7" viewBox="0 0 5 7"><path d="M1.2 1.3 L3.8 3.5 L1.2 5.7 Z" fill="#606060"/></svg>
<div class="a" style="left:24px;top:198px;width:347px;height:11px;border:1px solid #9a9da3;border-radius:2px;background:linear-gradient(#f6f6f7 0%,#e9eaec 45%,#d8dadd 55%,#dfe1e4 100%)"></div>
<div class="a" style="left:195px;top:201px;width:1px;height:4px;background:#777;box-shadow:2px 0 0 #777,4px 0 0 #777"></div>
<div class="sunk" style="left:10px;top:215px;width:834px;height:28px;background:#b9fcf8"></div>
<div class="a" style="left:831px;top:216px;width:12px;height:26px;background:#eceded"></div>
<svg class="a" style="left:834px;top:221px" width="6" height="4" viewBox="0 0 6 4"><path d="M0.5 3.5 L3 0.8 L5.5 3.5 Z" fill="#9a9a9a"/></svg>
<svg class="a" style="left:834px;top:233px" width="6" height="4" viewBox="0 0 6 4"><path d="M0.5 0.5 L3 3.2 L5.5 0.5 Z" fill="#9a9a9a"/></svg>
<div id="nm1" class="t" style="left:16.6px;top:217px;font-size:8.1px;line-height:11px;height:11px;letter-spacing:-0.312px;color:#000;white-space:pre;">Name=Vertical_Coefficient_of_Consolidation.</div>
<div id="nm2" class="t" style="left:171px;top:217px;font-size:8.1px;line-height:11px;height:11px;letter-spacing:-0.154px;color:#000;white-space:pre;">Vertical coefficient of consolidation, cv</div>
<div class="sunk" style="left:847px;top:215px;width:43px;height:28px;background:#becfea"></div>
<div id="rw1a" class="t" style="left:857.7px;top:216px;font-size:8.1px;line-height:11px;height:11px;letter-spacing:-0.400px;color:#000;white-space:pre;">Row 1</div>
<div id="rw1b" class="t" style="left:862px;top:226px;font-size:8.1px;line-height:11px;height:11px;letter-spacing:-0.400px;color:#000;white-space:pre;">of 1</div>
<div class="a" style="left:6px;top:247px;width:888px;height:1px;background:#dfe7f6"></div>
<div class="a" style="left:6px;top:248px;width:888px;height:1px;background:#7f8590"></div>
<div class="a" style="left:6px;top:252px;width:888px;height:1px;background:#f4f7fc"></div>
<div class="sunk" style="left:10px;top:257px;width:832px;height:18px;background:#fff"></div>
<div id="dtr1" class="t b" style="left:15.2px;top:259px;font-size:8.2px;line-height:11px;height:11px;letter-spacing:0.157px;color:#000;white-space:pre;">[Dissipation Test Readings]</div>
<div id="dtr2" class="t b" style="left:143.5px;top:259px;font-size:8.2px;line-height:11px;height:11px;letter-spacing:0.299px;color:#000;white-space:pre;">V-Diss test OC, 61660, 7.49</div>
<div class="btn" style="left:845px;top:257px;width:45px;height:18px"></div>
<div id="th2" class="t" style="left:849.8px;top:261px;font-size:8.1px;line-height:11px;height:11px;letter-spacing:-0.228px;color:#000;white-space:pre;">Table Help</div>
<div class="a" style="left:10px;top:280px;width:880px;height:224px;background:#ababab"></div>
<div class="a" style="left:10px;top:280px;width:880px;height:1px;background:#7f7f7f"></div>
<div class="a" style="left:10px;top:280px;width:1px;height:224px;background:#7f7f7f"></div>
<div class="a" style="left:10px;top:503px;width:880px;height:1px;background:#fff"></div>
<div class="a" style="left:889px;top:280px;width:1px;height:224px;background:#fff"></div>
<div class="a" style="left:0;top:0;width:900px;height:503px;overflow:hidden">
<div class="hc" style="left:11px;top:281px;width:12px;height:31px;background:#becfea"></div>
<div class="c" style="left:11px;top:312px;width:12px;height:13px;background:#ffffe8;border-color:#8e9198;"></div>
<div class="c" style="left:11px;top:325px;width:12px;height:14px;background:#becfea;border-color:#8e9198;border-left:1px solid #eef3fb;border-top:1px solid #eef3fb;"></div>
<div class="c" style="left:11px;top:339px;width:12px;height:13px;background:#becfea;border-color:#8e9198;border-left:1px solid #eef3fb;border-top:1px solid #eef3fb;"></div>
<div class="c" style="left:11px;top:352px;width:12px;height:14px;background:#becfea;border-color:#8e9198;border-left:1px solid #eef3fb;border-top:1px solid #eef3fb;"></div>
<div class="c" style="left:11px;top:366px;width:12px;height:13px;background:#becfea;border-color:#8e9198;border-left:1px solid #eef3fb;border-top:1px solid #eef3fb;"></div>
<div class="c" style="left:11px;top:379px;width:12px;height:14px;background:#becfea;border-color:#8e9198;border-left:1px solid #eef3fb;border-top:1px solid #eef3fb;"></div>
<div class="c" style="left:11px;top:393px;width:12px;height:13px;background:#becfea;border-color:#8e9198;border-left:1px solid #eef3fb;border-top:1px solid #eef3fb;"></div>
<div class="c" style="left:11px;top:406px;width:12px;height:14px;background:#becfea;border-color:#8e9198;border-left:1px solid #eef3fb;border-top:1px solid #eef3fb;"></div>
<div class="c" style="left:11px;top:420px;width:12px;height:13px;background:#becfea;border-color:#8e9198;border-left:1px solid #eef3fb;border-top:1px solid #eef3fb;"></div>
<div class="c" style="left:11px;top:433px;width:12px;height:14px;background:#becfea;border-color:#8e9198;border-left:1px solid #eef3fb;border-top:1px solid #eef3fb;"></div>
<div class="c" style="left:11px;top:447px;width:12px;height:13px;background:#becfea;border-color:#8e9198;border-left:1px solid #eef3fb;border-top:1px solid #eef3fb;"></div>
<div class="c" style="left:11px;top:460px;width:12px;height:14px;background:#becfea;border-color:#8e9198;border-left:1px solid #eef3fb;border-top:1px solid #eef3fb;"></div>
<div class="c" style="left:11px;top:474px;width:12px;height:13px;background:#becfea;border-color:#8e9198;border-left:1px solid #eef3fb;border-top:1px solid #eef3fb;"></div>
<div class="c" style="left:11px;top:487px;width:12px;height:14px;background:#becfea;border-color:#8e9198;border-left:1px solid #eef3fb;border-top:1px solid #eef3fb;"></div>
<div class="c" style="left:11px;top:501px;width:12px;height:13px;background:#becfea;border-color:#8e9198;border-left:1px solid #eef3fb;border-top:1px solid #eef3fb;"></div>
<div class="hc" style="left:23px;top:281px;width:38px;height:31px;background:#ffffe3"></div>
<div class="t b" id="g1_0" style="left:13px;width:58px;top:281px;text-align:center;font-size:8.4px;line-height:12px;height:12px;letter-spacing:-0.1px;text-indent:-0.1px">t</div>
<div class="t b" id="g1_1" style="left:13px;width:58px;top:290px;text-align:center;font-size:8.4px;line-height:12px;height:12px;letter-spacing:-0.1px;text-indent:-0.1px">(s)</div>
<div class="c" style="left:23px;top:312px;width:38px;height:13px;background:#ffff80"></div>
<div class="t b" id="w0_1" style="right:842.00px;top:311px;font-size:8.8px;line-height:12px;height:12px;letter-spacing:0.0px;color:#000">0.3</div>
<div class="c" style="left:23px;top:325px;width:38px;height:14px;background:#ffff80"></div>
<div class="t b" id="w1_1" style="right:842.00px;top:324px;font-size:8.8px;line-height:12px;height:12px;letter-spacing:0.0px;color:#000">0.7</div>
<div class="c" style="left:23px;top:339px;width:38px;height:13px;background:#ffff80"></div>
<div class="t b" id="w2_1" style="right:842.00px;top:338px;font-size:8.8px;line-height:12px;height:12px;letter-spacing:0.0px;color:#000">1.0</div>
<div class="c" style="left:23px;top:352px;width:38px;height:14px;background:#ffff80"></div>
<div class="t b" id="w3_1" style="right:842.00px;top:351px;font-size:8.8px;line-height:12px;height:12px;letter-spacing:0.0px;color:#000">1.4</div>
<div class="c" style="left:23px;top:366px;width:38px;height:13px;background:#ffff80"></div>
<div class="t b" id="w4_1" style="right:842.00px;top:365px;font-size:8.8px;line-height:12px;height:12px;letter-spacing:0.0px;color:#000">1.8</div>
<div class="c" style="left:23px;top:379px;width:38px;height:14px;background:#ffff80"></div>
<div class="t b" id="w5_1" style="right:842.00px;top:378px;font-size:8.8px;line-height:12px;height:12px;letter-spacing:0.0px;color:#000">2.2</div>
<div class="c" style="left:23px;top:393px;width:38px;height:13px;background:#ffff80"></div>
<div class="t b" id="w6_1" style="right:842.00px;top:392px;font-size:8.8px;line-height:12px;height:12px;letter-spacing:0.0px;color:#000">2.5</div>
<div class="c" style="left:23px;top:406px;width:38px;height:14px;background:#ffff80"></div>
<div class="t b" id="w7_1" style="right:842.00px;top:405px;font-size:8.8px;line-height:12px;height:12px;letter-spacing:0.0px;color:#000">3.0</div>
<div class="c" style="left:23px;top:420px;width:38px;height:13px;background:#ffff80"></div>
<div class="t b" id="w8_1" style="right:842.00px;top:419px;font-size:8.8px;line-height:12px;height:12px;letter-spacing:0.0px;color:#000">3.3</div>
<div class="c" style="left:23px;top:433px;width:38px;height:14px;background:#ffff80"></div>
<div class="t b" id="w9_1" style="right:842.00px;top:432px;font-size:8.8px;line-height:12px;height:12px;letter-spacing:0.0px;color:#000">3.7</div>
<div class="c" style="left:23px;top:447px;width:38px;height:13px;background:#ffff80"></div>
<div class="t b" id="w10_1" style="right:842.00px;top:446px;font-size:8.8px;line-height:12px;height:12px;letter-spacing:0.0px;color:#000">4.1</div>
<div class="c" style="left:23px;top:460px;width:38px;height:14px;background:#ffff80"></div>
<div class="t b" id="w11_1" style="right:842.00px;top:459px;font-size:8.8px;line-height:12px;height:12px;letter-spacing:0.0px;color:#000">4.5</div>
<div class="c" style="left:23px;top:474px;width:38px;height:13px;background:#ffff80"></div>
<div class="t b" id="w12_1" style="right:842.00px;top:473px;font-size:8.8px;line-height:12px;height:12px;letter-spacing:0.0px;color:#000">4.8</div>
<div class="c" style="left:23px;top:487px;width:38px;height:14px;background:#ffff80"></div>
<div class="t b" id="w13_1" style="right:842.00px;top:486px;font-size:8.8px;line-height:12px;height:12px;letter-spacing:0.0px;color:#000">5.2</div>
<div class="c" style="left:23px;top:501px;width:38px;height:13px;background:#ffff80"></div>
<div class="t b" id="w14_1" style="right:842.00px;top:500px;font-size:8.8px;line-height:12px;height:12px;letter-spacing:0.0px;color:#000">5.6</div>
<div class="hc" style="left:61px;top:281px;width:34px;height:31px;background:#becfea"></div>
<div class="t b" id="g2_0" style="left:51px;width:54px;top:281px;text-align:center;font-size:8.4px;line-height:12px;height:12px;letter-spacing:-0.1px;text-indent:-0.1px">qc</div>
<div class="t b" id="g2_1" style="left:51px;width:54px;top:290px;text-align:center;font-size:8.4px;line-height:12px;height:12px;letter-spacing:-0.1px;text-indent:-0.1px">(MPa)</div>
<div class="c" style="left:61px;top:312px;width:34px;height:13px;background:#efdc84"></div>
<div class="c" style="left:61px;top:325px;width:34px;height:14px;background:#efdc84"></div>
<div class="c" style="left:61px;top:339px;width:34px;height:13px;background:#efdc84"></div>
<div class="c" style="left:61px;top:352px;width:34px;height:14px;background:#efdc84"></div>
<div class="c" style="left:61px;top:366px;width:34px;height:13px;background:#efdc84"></div>
<div class="c" style="left:61px;top:379px;width:34px;height:14px;background:#efdc84"></div>
<div class="c" style="left:61px;top:393px;width:34px;height:13px;background:#efdc84"></div>
<div class="c" style="left:61px;top:406px;width:34px;height:14px;background:#efdc84"></div>
<div class="c" style="left:61px;top:420px;width:34px;height:13px;background:#efdc84"></div>
<div class="c" style="left:61px;top:433px;width:34px;height:14px;background:#efdc84"></div>
<div class="c" style="left:61px;top:447px;width:34px;height:13px;background:#efdc84"></div>
<div class="c" style="left:61px;top:460px;width:34px;height:14px;background:#efdc84"></div>
<div class="c" style="left:61px;top:474px;width:34px;height:13px;background:#efdc84"></div>
<div class="c" style="left:61px;top:487px;width:34px;height:14px;background:#efdc84"></div>
<div class="c" style="left:61px;top:501px;width:34px;height:13px;background:#efdc84"></div>
<div class="hc" style="left:95px;top:281px;width:31px;height:31px;background:#becfea"></div>
<div class="t b" id="g3_0" style="left:85px;width:51px;top:281px;text-align:center;font-size:8.4px;line-height:12px;height:12px;letter-spacing:-0.1px;text-indent:-0.1px">fs</div>
<div class="t b" id="g3_1" style="left:85px;width:51px;top:290px;text-align:center;font-size:8.4px;line-height:12px;height:12px;letter-spacing:-0.1px;text-indent:-0.1px">(kPa)</div>
<div class="c" style="left:95px;top:312px;width:31px;height:13px;background:#efdc84"></div>
<div class="c" style="left:95px;top:325px;width:31px;height:14px;background:#efdc84"></div>
<div class="c" style="left:95px;top:339px;width:31px;height:13px;background:#efdc84"></div>
<div class="c" style="left:95px;top:352px;width:31px;height:14px;background:#efdc84"></div>
<div class="c" style="left:95px;top:366px;width:31px;height:13px;background:#efdc84"></div>
<div class="c" style="left:95px;top:379px;width:31px;height:14px;background:#efdc84"></div>
<div class="c" style="left:95px;top:393px;width:31px;height:13px;background:#efdc84"></div>
<div class="c" style="left:95px;top:406px;width:31px;height:14px;background:#efdc84"></div>
<div class="c" style="left:95px;top:420px;width:31px;height:13px;background:#efdc84"></div>
<div class="c" style="left:95px;top:433px;width:31px;height:14px;background:#efdc84"></div>
<div class="c" style="left:95px;top:447px;width:31px;height:13px;background:#efdc84"></div>
<div class="c" style="left:95px;top:460px;width:31px;height:14px;background:#efdc84"></div>
<div class="c" style="left:95px;top:474px;width:31px;height:13px;background:#efdc84"></div>
<div class="c" style="left:95px;top:487px;width:31px;height:14px;background:#efdc84"></div>
<div class="c" style="left:95px;top:501px;width:31px;height:13px;background:#efdc84"></div>
<div class="hc" style="left:126px;top:281px;width:31px;height:31px;background:#becfea"></div>
<div class="t b" id="g4_0" style="left:116px;width:51px;top:281px;text-align:center;font-size:8.4px;line-height:12px;height:12px;letter-spacing:-0.1px;text-indent:-0.1px">u1</div>
<div class="t b" id="g4_1" style="left:116px;width:51px;top:290px;text-align:center;font-size:8.4px;line-height:12px;height:12px;letter-spacing:-0.1px;text-indent:-0.1px">(kPa)</div>
<div class="c" style="left:126px;top:312px;width:31px;height:13px;background:#efdc84"></div>
<div class="c" style="left:126px;top:325px;width:31px;height:14px;background:#efdc84"></div>
<div class="c" style="left:126px;top:339px;width:31px;height:13px;background:#efdc84"></div>
<div class="c" style="left:126px;top:352px;width:31px;height:14px;background:#efdc84"></div>
<div class="c" style="left:126px;top:366px;width:31px;height:13px;background:#efdc84"></div>
<div class="c" style="left:126px;top:379px;width:31px;height:14px;background:#efdc84"></div>
<div class="c" style="left:126px;top:393px;width:31px;height:13px;background:#efdc84"></div>
<div class="c" style="left:126px;top:406px;width:31px;height:14px;background:#efdc84"></div>
<div class="c" style="left:126px;top:420px;width:31px;height:13px;background:#efdc84"></div>
<div class="c" style="left:126px;top:433px;width:31px;height:14px;background:#efdc84"></div>
<div class="c" style="left:126px;top:447px;width:31px;height:13px;background:#efdc84"></div>
<div class="c" style="left:126px;top:460px;width:31px;height:14px;background:#efdc84"></div>
<div class="c" style="left:126px;top:474px;width:31px;height:13px;background:#efdc84"></div>
<div class="c" style="left:126px;top:487px;width:31px;height:14px;background:#efdc84"></div>
<div class="c" style="left:126px;top:501px;width:31px;height:13px;background:#efdc84"></div>
<div class="hc" style="left:157px;top:281px;width:32px;height:31px;background:#becfea"></div>
<div class="t b" id="g5_0" style="left:147px;width:52px;top:281px;text-align:center;font-size:8.4px;line-height:12px;height:12px;letter-spacing:-0.1px;text-indent:-0.1px">u2</div>
<div class="t b" id="g5_1" style="left:147px;width:52px;top:290px;text-align:center;font-size:8.4px;line-height:12px;height:12px;letter-spacing:-0.1px;text-indent:-0.1px">(kPa)</div>
<div class="c" style="left:157px;top:312px;width:32px;height:13px;background:#efdc84"></div>
<div class="t b" id="w0_5" style="right:714.00px;top:311px;font-size:8.8px;line-height:12px;height:12px;letter-spacing:0.0px;color:#000">241.0</div>
<div class="c" style="left:157px;top:325px;width:32px;height:14px;background:#efdc84"></div>
<div class="t b" id="w1_5" style="right:714.00px;top:324px;font-size:8.8px;line-height:12px;height:12px;letter-spacing:0.0px;color:#000">244.0</div>
<div class="c" style="left:157px;top:339px;width:32px;height:13px;background:#efdc84"></div>
<div class="t b" id="w2_5" style="right:714.00px;top:338px;font-size:8.8px;line-height:12px;height:12px;letter-spacing:0.0px;color:#000">242.0</div>
<div class="c" style="left:157px;top:352px;width:32px;height:14px;background:#efdc84"></div>
<div class="t b" id="w3_5" style="right:714.00px;top:351px;font-size:8.8px;line-height:12px;height:12px;letter-spacing:0.0px;color:#000">245.0</div>
<div class="c" style="left:157px;top:366px;width:32px;height:13px;background:#efdc84"></div>
<div class="t b" id="w4_5" style="right:714.00px;top:365px;font-size:8.8px;line-height:12px;height:12px;letter-spacing:0.0px;color:#000">245.0</div>
<div class="c" style="left:157px;top:379px;width:32px;height:14px;background:#efdc84"></div>
<div class="t b" id="w5_5" style="right:714.00px;top:378px;font-size:8.8px;line-height:12px;height:12px;letter-spacing:0.0px;color:#000">245.0</div>
<div class="c" style="left:157px;top:393px;width:32px;height:13px;background:#efdc84"></div>
<div class="t b" id="w6_5" style="right:714.00px;top:392px;font-size:8.8px;line-height:12px;height:12px;letter-spacing:0.0px;color:#000">246.0</div>
<div class="c" style="left:157px;top:406px;width:32px;height:14px;background:#efdc84"></div>
<div class="t b" id="w7_5" style="right:714.00px;top:405px;font-size:8.8px;line-height:12px;height:12px;letter-spacing:0.0px;color:#000">246.0</div>
<div class="c" style="left:157px;top:420px;width:32px;height:13px;background:#efdc84"></div>
<div class="t b" id="w8_5" style="right:714.00px;top:419px;font-size:8.8px;line-height:12px;height:12px;letter-spacing:0.0px;color:#000">246.0</div>
<div class="c" style="left:157px;top:433px;width:32px;height:14px;background:#efdc84"></div>
<div class="t b" id="w9_5" style="right:714.00px;top:432px;font-size:8.8px;line-height:12px;height:12px;letter-spacing:0.0px;color:#000">247.0</div>
<div class="c" style="left:157px;top:447px;width:32px;height:13px;background:#efdc84"></div>
<div class="t b" id="w10_5" style="right:714.00px;top:446px;font-size:8.8px;line-height:12px;height:12px;letter-spacing:0.0px;color:#000">247.0</div>
<div class="c" style="left:157px;top:460px;width:32px;height:14px;background:#efdc84"></div>
<div class="t b" id="w11_5" style="right:714.00px;top:459px;font-size:8.8px;line-height:12px;height:12px;letter-spacing:0.0px;color:#000">248.0</div>
<div class="c" style="left:157px;top:474px;width:32px;height:13px;background:#efdc84"></div>
<div class="t b" id="w12_5" style="right:714.00px;top:473px;font-size:8.8px;line-height:12px;height:12px;letter-spacing:0.0px;color:#000">249.0</div>
<div class="c" style="left:157px;top:487px;width:32px;height:14px;background:#efdc84"></div>
<div class="t b" id="w13_5" style="right:714.00px;top:486px;font-size:8.8px;line-height:12px;height:12px;letter-spacing:0.0px;color:#000">249.0</div>
<div class="c" style="left:157px;top:501px;width:32px;height:13px;background:#efdc84"></div>
<div class="t b" id="w14_5" style="right:714.00px;top:500px;font-size:8.8px;line-height:12px;height:12px;letter-spacing:0.0px;color:#000">250.0</div>
<div class="hc" style="left:189px;top:281px;width:31px;height:31px;background:#becfea"></div>
<div class="t b" id="g6_0" style="left:179px;width:51px;top:281px;text-align:center;font-size:8.4px;line-height:12px;height:12px;letter-spacing:-0.1px;text-indent:-0.1px">u3</div>
<div class="t b" id="g6_1" style="left:179px;width:51px;top:290px;text-align:center;font-size:8.4px;line-height:12px;height:12px;letter-spacing:-0.1px;text-indent:-0.1px">(kPa)</div>
<div class="c" style="left:189px;top:312px;width:31px;height:13px;background:#efdc84"></div>
<div class="c" style="left:189px;top:325px;width:31px;height:14px;background:#efdc84"></div>
<div class="c" style="left:189px;top:339px;width:31px;height:13px;background:#efdc84"></div>
<div class="c" style="left:189px;top:352px;width:31px;height:14px;background:#efdc84"></div>
<div class="c" style="left:189px;top:366px;width:31px;height:13px;background:#efdc84"></div>
<div class="c" style="left:189px;top:379px;width:31px;height:14px;background:#efdc84"></div>
<div class="c" style="left:189px;top:393px;width:31px;height:13px;background:#efdc84"></div>
<div class="c" style="left:189px;top:406px;width:31px;height:14px;background:#efdc84"></div>
<div class="c" style="left:189px;top:420px;width:31px;height:13px;background:#efdc84"></div>
<div class="c" style="left:189px;top:433px;width:31px;height:14px;background:#efdc84"></div>
<div class="c" style="left:189px;top:447px;width:31px;height:13px;background:#efdc84"></div>
<div class="c" style="left:189px;top:460px;width:31px;height:14px;background:#efdc84"></div>
<div class="c" style="left:189px;top:474px;width:31px;height:13px;background:#efdc84"></div>
<div class="c" style="left:189px;top:487px;width:31px;height:14px;background:#efdc84"></div>
<div class="c" style="left:189px;top:501px;width:31px;height:13px;background:#efdc84"></div>
<div class="hc" style="left:220px;top:281px;width:34px;height:31px;background:#becfea"></div>
<div class="t b" id="g7_0" style="left:210px;width:54px;top:281px;text-align:center;font-size:8.4px;line-height:12px;height:12px;letter-spacing:-0.1px;text-indent:-0.1px">U</div>
<div class="c" style="left:220px;top:312px;width:34px;height:13px;background:#b3e7a1"></div>
<div class="t b" id="w0_7" style="right:649.00px;top:311px;font-size:8.8px;line-height:12px;height:12px;letter-spacing:0.0px;color:#000">0.823</div>
<div class="c" style="left:220px;top:325px;width:34px;height:14px;background:#b3e7a1"></div>
<div class="t b" id="w1_7" style="right:649.00px;top:324px;font-size:8.8px;line-height:12px;height:12px;letter-spacing:0.0px;color:#000">0.838</div>
<div class="c" style="left:220px;top:339px;width:34px;height:13px;background:#b3e7a1"></div>
<div class="t b" id="w2_7" style="right:649.00px;top:338px;font-size:8.8px;line-height:12px;height:12px;letter-spacing:0.0px;color:#000">0.828</div>
<div class="c" style="left:220px;top:352px;width:34px;height:14px;background:#b3e7a1"></div>
<div class="t b" id="w3_7" style="right:649.00px;top:351px;font-size:8.8px;line-height:12px;height:12px;letter-spacing:0.0px;color:#000">0.843</div>
<div class="c" style="left:220px;top:366px;width:34px;height:13px;background:#b3e7a1"></div>
<div class="t b" id="w4_7" style="right:649.00px;top:365px;font-size:8.8px;line-height:12px;height:12px;letter-spacing:0.0px;color:#000">0.843</div>
<div class="c" style="left:220px;top:379px;width:34px;height:14px;background:#b3e7a1"></div>
<div class="t b" id="w5_7" style="right:649.00px;top:378px;font-size:8.8px;line-height:12px;height:12px;letter-spacing:0.0px;color:#000">0.843</div>
<div class="c" style="left:220px;top:393px;width:34px;height:13px;background:#b3e7a1"></div>
<div class="t b" id="w6_7" style="right:649.00px;top:392px;font-size:8.8px;line-height:12px;height:12px;letter-spacing:0.0px;color:#000">0.848</div>
<div class="c" style="left:220px;top:406px;width:34px;height:14px;background:#b3e7a1"></div>
<div class="t b" id="w7_7" style="right:649.00px;top:405px;font-size:8.8px;line-height:12px;height:12px;letter-spacing:0.0px;color:#000">0.848</div>
<div class="c" style="left:220px;top:420px;width:34px;height:13px;background:#b3e7a1"></div>
<div class="t b" id="w8_7" style="right:649.00px;top:419px;font-size:8.8px;line-height:12px;height:12px;letter-spacing:0.0px;color:#000">0.848</div>
<div class="c" style="left:220px;top:433px;width:34px;height:14px;background:#b3e7a1"></div>
<div class="t b" id="w9_7" style="right:649.00px;top:432px;font-size:8.8px;line-height:12px;height:12px;letter-spacing:0.0px;color:#000">0.853</div>
<div class="c" style="left:220px;top:447px;width:34px;height:13px;background:#b3e7a1"></div>
<div class="t b" id="w10_7" style="right:649.00px;top:446px;font-size:8.8px;line-height:12px;height:12px;letter-spacing:0.0px;color:#000">0.853</div>
<div class="c" style="left:220px;top:460px;width:34px;height:14px;background:#b3e7a1"></div>
<div class="t b" id="w11_7" style="right:649.00px;top:459px;font-size:8.8px;line-height:12px;height:12px;letter-spacing:0.0px;color:#000">0.858</div>
<div class="c" style="left:220px;top:474px;width:34px;height:13px;background:#b3e7a1"></div>
<div class="t b" id="w12_7" style="right:649.00px;top:473px;font-size:8.8px;line-height:12px;height:12px;letter-spacing:0.0px;color:#000">0.862</div>
<div class="c" style="left:220px;top:487px;width:34px;height:14px;background:#b3e7a1"></div>
<div class="t b" id="w13_7" style="right:649.00px;top:486px;font-size:8.8px;line-height:12px;height:12px;letter-spacing:0.0px;color:#000">0.862</div>
<div class="c" style="left:220px;top:501px;width:34px;height:13px;background:#b3e7a1"></div>
<div class="t b" id="w14_7" style="right:649.00px;top:500px;font-size:8.8px;line-height:12px;height:12px;letter-spacing:0.0px;color:#000">0.867</div>
</div>
<div class="a" style="left:876px;top:281px;width:13px;height:222px;background:#eff0f1"></div>
<svg class="a" style="left:880px;top:285px" width="7" height="5" viewBox="0 0 7 5"><path d="M1 4 L3.5 1.2 L6 4 Z" fill="#505050"/></svg>
<svg class="a" style="left:880px;top:494px" width="7" height="5" viewBox="0 0 7 5"><path d="M1 1 L3.5 3.8 L6 1 Z" fill="#505050"/></svg>
<div class="a" style="left:877px;top:294px;width:11px;height:11px;border:1px solid #979aa0;border-radius:2px;background:linear-gradient(to right,#f5f5f6 0%,#e6e7e9 45%,#d3d5d8 55%,#dcdee1 100%)"></div>
<div class="sunk" style="left:10px;top:509px;width:833px;height:27px;background:#becfea"></div>
<div class="a" style="left:831px;top:510px;width:11px;height:25px;background:#eceded"></div>
<svg class="a" style="left:834px;top:514px" width="6" height="4" viewBox="0 0 6 4"><path d="M0.5 3.5 L3 0.8 L5.5 3.5 Z" fill="#9a9a9a"/></svg>
<svg class="a" style="left:834px;top:526px" width="6" height="4" viewBox="0 0 6 4"><path d="M0.5 0.5 L3 3.2 L5.5 0.5 Z" fill="#9a9a9a"/></svg>
<div class="sunk" style="left:847px;top:509px;width:43px;height:27px;background:#fff"></div>
<div id="rw2a" class="t" style="left:858px;top:509px;font-size:8.1px;line-height:11px;height:11px;letter-spacing:-0.400px;color:#000;white-space:pre;">Row 1</div>
<div id="rw2b" class="t" style="left:855.8px;top:518px;font-size:8.1px;line-height:11px;height:11px;letter-spacing:-0.318px;color:#000;white-space:pre;">of 1191</div>
</body></html>
